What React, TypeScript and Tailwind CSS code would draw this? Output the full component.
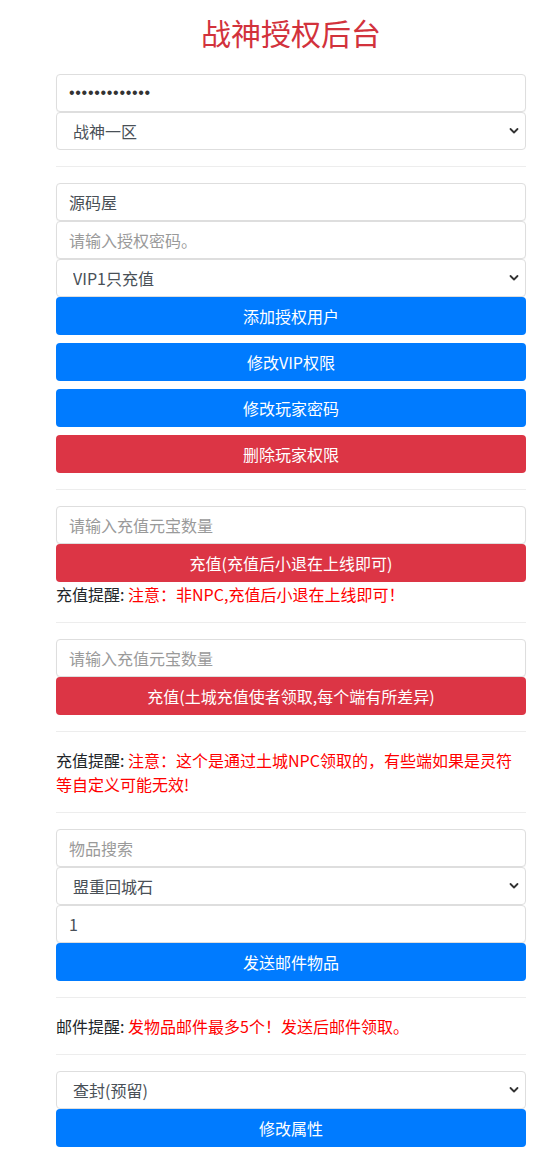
import React from "react";

const font = { fontFamily: '"Noto Sans CJK SC", "Noto Sans", sans-serif' };

function TextInput({ placeholder, value }: { placeholder?: string; value?: string }) {
  return (
    <input
      type="text"
      readOnly
      placeholder={placeholder}
      defaultValue={value}
      className="block w-full h-[38px] px-3 border border-[#dedede] rounded-[4px] bg-white text-[16px] text-[#495057] placeholder:text-[#9a9a9a] outline-none shadow-[0_1px_1px_rgba(0,0,0,0.04)]"
      style={font}
    />
  );
}

function Select({ value }: { value: string }) {
  return (
    <div className="relative w-full h-[38px]">
      <select
        defaultValue={value}
        className="block w-full h-[38px] pl-4 pr-8 border border-[#dedede] rounded-[4px] bg-white text-[16px] text-[#495057] appearance-none outline-none"
        style={font}
      >
        <option>{value}</option>
      </select>
      <svg
        className="absolute right-[7px] top-[15px] pointer-events-none"
        width="10"
        height="8"
        viewBox="0 0 10 8"
        fill="none"
      >
        <path d="M1.5 2 L5 5.5 L8.5 2" stroke="#333" strokeWidth="1.8" strokeLinecap="round" strokeLinejoin="round" />
      </svg>
    </div>
  );
}

function Btn({ children, color }: { children: React.ReactNode; color: "blue" | "red" }) {
  return (
    <button
      className={
        "block w-full h-[38px] rounded-[4px] text-white text-[16px] " +
        (color === "blue" ? "bg-[#007bff]" : "bg-[#dc3545]")
      }
      style={font}
    >
      {children}
    </button>
  );
}

function Hr() {
  return <div className="my-4 h-px bg-[#ededed]" />;
}

export default function App() {
  return (
    <div className="bg-white min-h-[1161px] text-[16px] leading-6 text-[#212529]" style={font}>
      <div className="ml-[56px] w-[470px] pt-[14px] pb-4">
        <h1 className="text-center text-[30px] leading-[36px] text-[#d2323c] font-normal mb-[24px]">战神授权后台</h1>

        <div className="flex flex-col">
          <input
            type="text"
            readOnly
            defaultValue="•••••••••••••"
            className="block w-full h-[38px] px-3 border border-[#dedede] rounded-[4px] bg-white text-[16px] tracking-[0.7px] text-[#333] outline-none shadow-[0_1px_1px_rgba(0,0,0,0.04)]"
            style={{ fontFamily: '"Liberation Sans", Arial, sans-serif' }}
          />
          <Select value="战神一区" />
        </div>

        <Hr />

        <div className="flex flex-col">
          <TextInput value="源码屋" />
          <TextInput placeholder="请输入授权密码。" />
          <Select value="VIP1只充值" />
          <div className="flex flex-col gap-2">
            <Btn color="blue">添加授权用户</Btn>
            <Btn color="blue">修改VIP权限</Btn>
            <Btn color="blue">修改玩家密码</Btn>
            <Btn color="red">删除玩家权限</Btn>
          </div>
        </div>

        <Hr />

        <div className="flex flex-col">
          <TextInput placeholder="请输入充值元宝数量" />
          <Btn color="red">充值(充值后小退在上线即可)</Btn>
          <p>
            充值提醒: <span className="text-[#f00]">注意：非NPC,充值后小退在上线即可！</span>
          </p>
        </div>

        <Hr />

        <div className="flex flex-col">
          <TextInput placeholder="请输入充值元宝数量" />
          <Btn color="red">充值(土城充值使者领取,每个端有所差异)</Btn>
        </div>

        <Hr />

        <p>
          充值提醒: <span className="text-[#f00]">注意：这个是通过土城NPC领取的，有些端如果是灵符<br />等自定义可能无效!</span>
        </p>

        <Hr />

        <div className="flex flex-col">
          <TextInput placeholder="物品搜索" />
          <Select value="盟重回城石" />
          <TextInput value="1" />
          <Btn color="blue">发送邮件物品</Btn>
        </div>

        <Hr />

        <p>
          邮件提醒: <span className="text-[#f00]">发物品邮件最多5个！发送后邮件领取。</span>
        </p>

        <Hr />

        <div className="flex flex-col">
          <Select value="查封(预留)" />
          <Btn color="blue">修改属性</Btn>
        </div>
      </div>
    </div>
  );
}
